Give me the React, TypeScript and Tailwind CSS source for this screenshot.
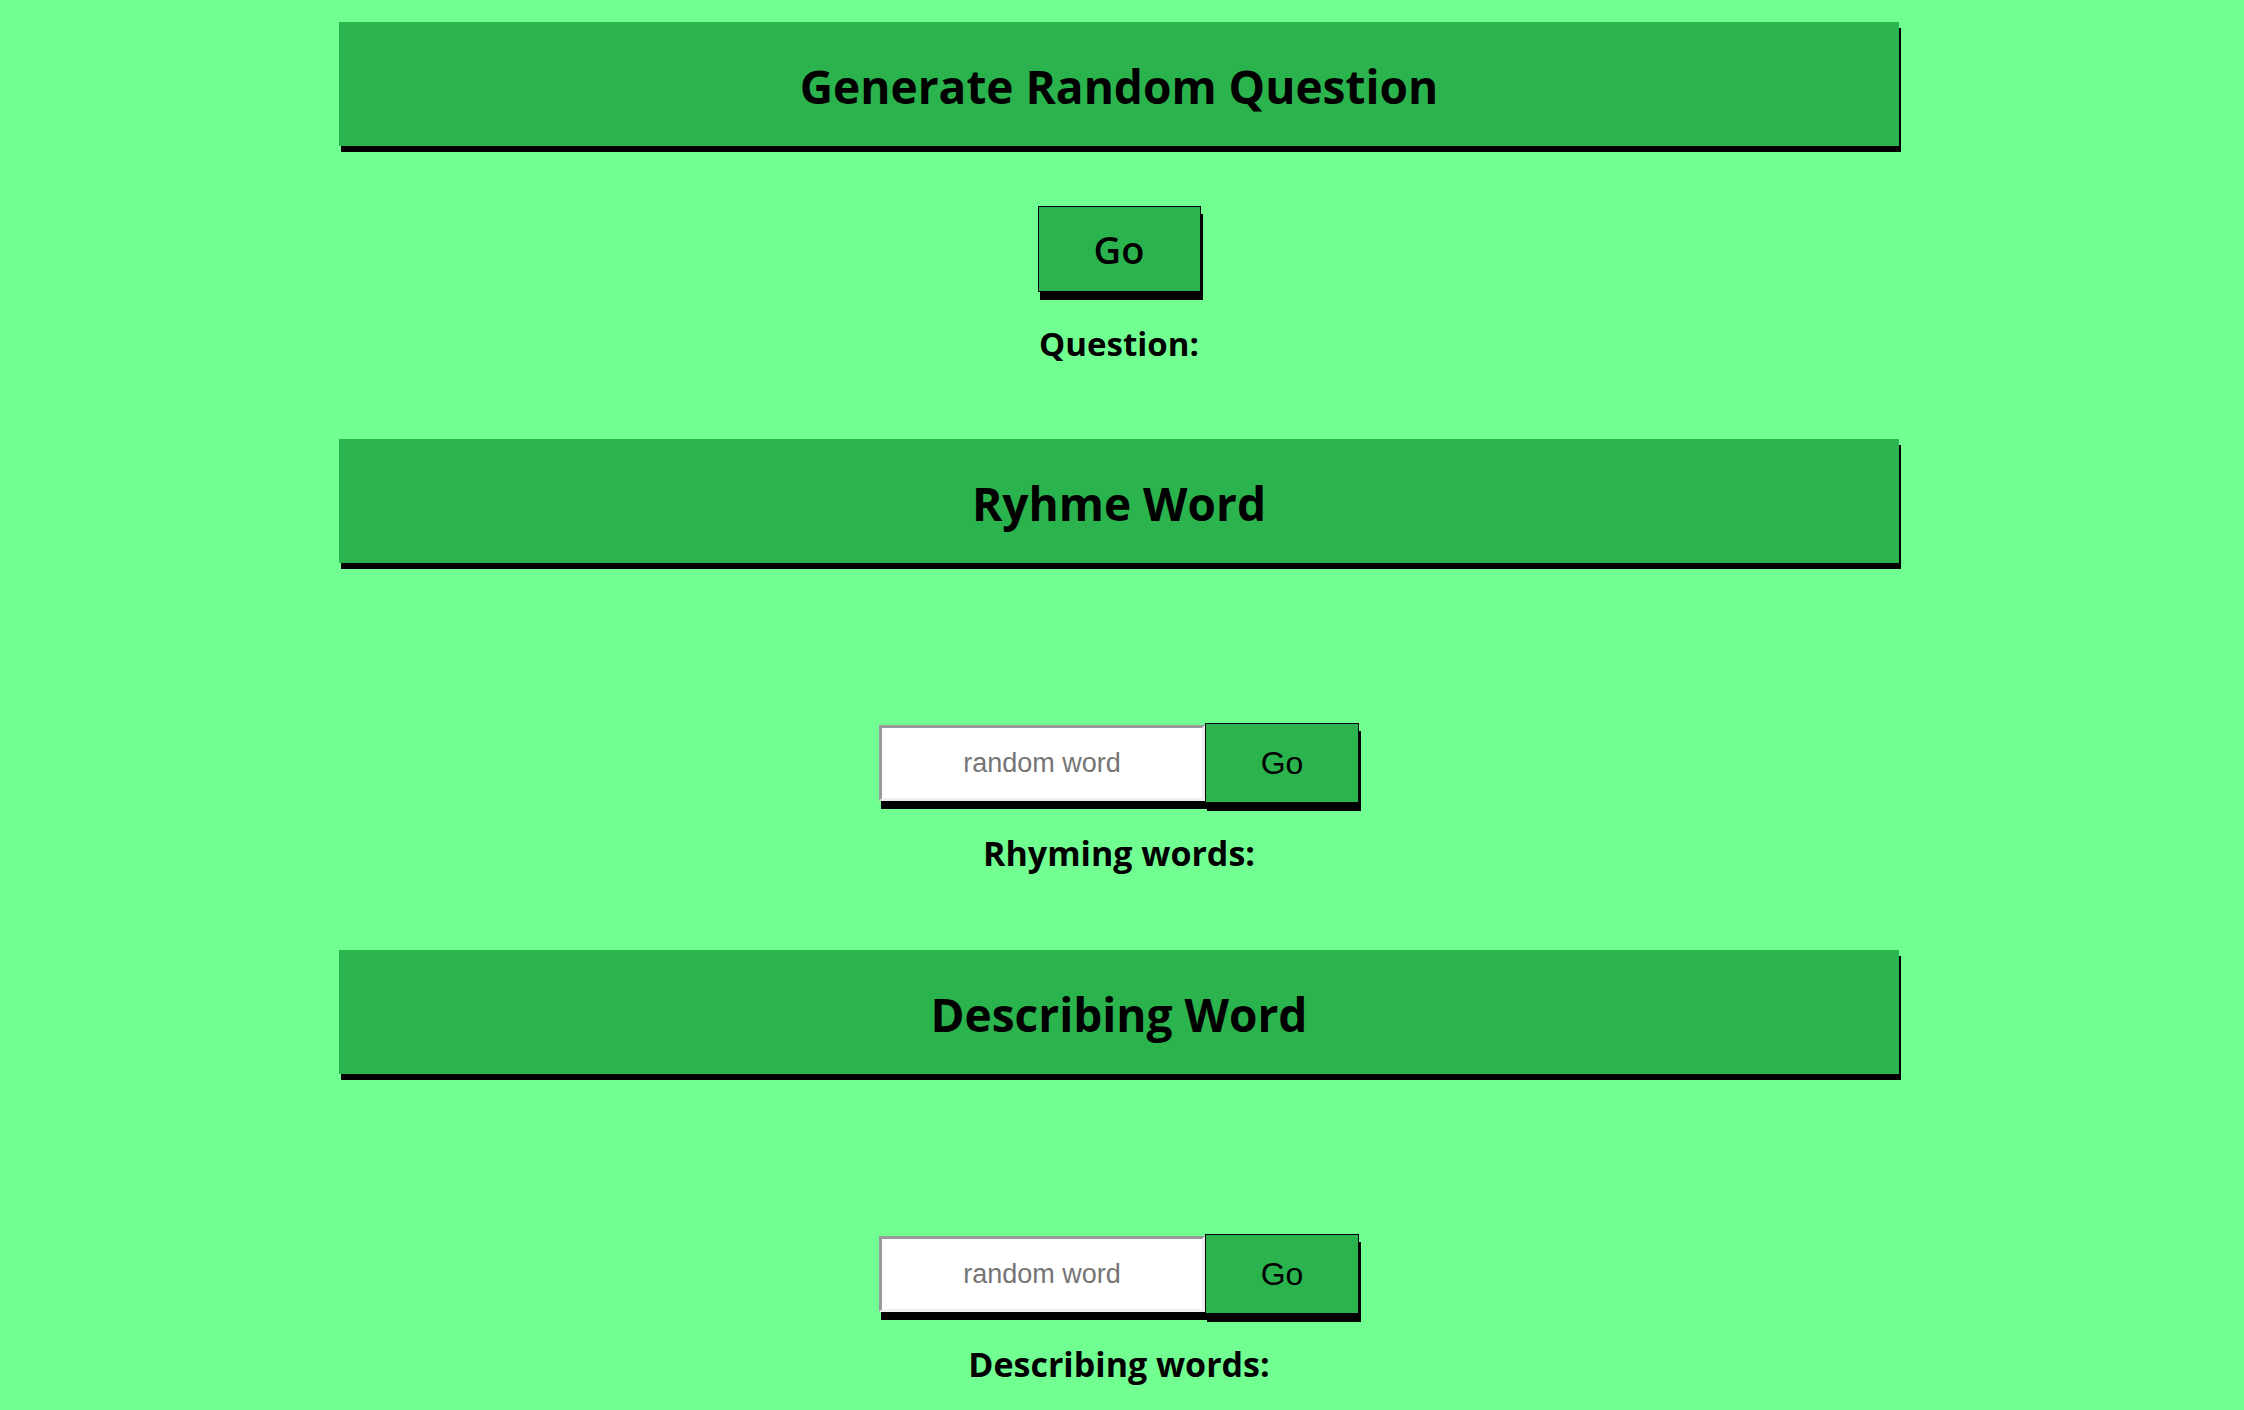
import { useState } from "react";



function Header(props: { title: string }) {
	return (
		<div className="w-full h-[124px] pt-[4px] flex items-center justify-center   bg-[#2bb44e] shadow-[2px_6px_0_#000]">
			<h1 className="text-[46px] font-bold leading-none text-black">{props.title}</h1>
		</div>
	)
}

function WordSearch(props: { label: string }) {

	const [word, setWord] = useState("")

	return (
		<>
			<div className="mt-[160px] flex items-center">
				<input
					value={word}
					onChange={e => setWord(e.target.value)}
					placeholder="random word"
					className="w-[326px] h-[76px]   bg-white text-center text-[27px] font-['Liberation_Sans',Arial,sans-serif]   border-[3px] border-t-[#9a9a9a] border-l-[#9a9a9a] border-r-[#eeeeee] border-b-[#eeeeee]   shadow-[2px_8px_0_#000] outline-none   placeholder:text-[#757575]"
				/>
				<button className="w-[154px] h-[80px]   bg-[#2bb44e] border-[1.5px] border-black shadow-[2px_8px_0_#000]   text-[32px] text-black font-['Liberation_Sans',Arial,sans-serif]">
					Go
				</button>
			</div>

			<p className="mt-[29px] text-[34px] font-bold leading-[43px]">{props.label}</p>
		</>
	)
}



function App() {
	return (
		<div className="min-h-screen pt-[22px] pb-[20px]   bg-[#72ff92] text-black font-['Open_Sans','Noto_Sans',sans-serif]">
			<div className="ml-[339px] w-[1560px]   flex flex-col items-center">

				<Header title="Generate Random Question" />

				<button className="mt-[60px] w-[163px] h-[86px]   bg-[#2bb44e] border-[1.5px] border-black shadow-[2px_8px_0_#000]   text-[38px] font-semibold">
					Go
				</button>

				<p className="mt-[30px] text-[33px] font-bold leading-[43px]">Question:</p>

				<div className="mt-[74px] w-full">
					<Header title="Ryhme Word" />
				</div>

				<WordSearch label="Rhyming words:" />

				<div className="mt-[75px] w-full">
					<Header title="Describing Word" />
				</div>

				<WordSearch label="Describing words:" />

			</div>
		</div>
	)
}

export default App
